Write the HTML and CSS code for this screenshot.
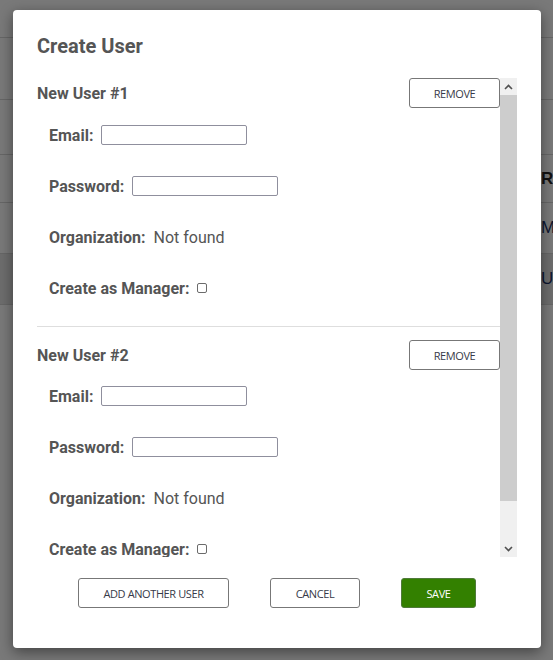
FILE: index.html
```html
<!DOCTYPE html>
<html>
<head>
<meta charset="utf-8">
<link rel="stylesheet" href="styles.css">
</head>
<body>
<div class="page">
  <div class="bg-row h37"></div>
  <div class="bg-row h63"></div>
  <div class="bg-row h55"></div>
  <div class="bg-row h48"><span class="cell head">Ro</span></div>
  <div class="bg-row h51"><span class="cell">M</span></div>
  <div class="bg-row h51 dark"><span class="cell">U</span></div>
  <div class="bg-row rest"></div>
</div>

<div class="modal">
  <h2 class="title">Create User</h2>
  <div class="scroll-wrap">
    <div class="scroll-content">
      <section class="user">
        <div class="user-head">
          <h3 class="user-title">New User #1</h3>
          <button class="btn remove">REMOVE</button>
        </div>
        <div class="field first"><label class="lbl">Email:</label><input class="inp" type="text"></div>
        <div class="field"><label class="lbl">Password:</label><input class="inp" type="password"></div>
        <div class="field"><span class="lbl">Organization:</span><span class="val">Not found</span></div>
        <div class="field"><label class="lbl">Create as Manager:</label><span class="chk"></span></div>
      </section>
      <div class="divider"></div>
      <section class="user second">
        <div class="user-head">
          <h3 class="user-title">New User #2</h3>
          <button class="btn remove">REMOVE</button>
        </div>
        <div class="field first"><label class="lbl">Email:</label><input class="inp" type="text"></div>
        <div class="field"><label class="lbl">Password:</label><input class="inp" type="password"></div>
        <div class="field"><span class="lbl">Organization:</span><span class="val">Not found</span></div>
        <div class="field"><label class="lbl">Create as Manager:</label><span class="chk"></span></div>
      </section>
      <div class="tail"></div>
    </div>
    <div class="scrollbar">
      <div class="sb-btn">
        <svg width="9" height="6" viewBox="0 0 9 6"><path d="M1 5 L4.5 1.5 L8 5" fill="none" stroke="#505050" stroke-width="1.6"/></svg>
      </div>
      <div class="sb-thumb"></div>
      <div class="sb-track"></div>
      <div class="sb-btn">
        <svg width="9" height="6" viewBox="0 0 9 6"><path d="M1 1 L4.5 4.5 L8 1" fill="none" stroke="#505050" stroke-width="1.6"/></svg>
      </div>
    </div>
  </div>
  <div class="footer">
    <button class="btn add">ADD ANOTHER USER</button>
    <button class="btn cancel">CANCEL</button>
    <button class="btn save">SAVE</button>
  </div>
</div>
</body>
</html>
```

FILE: styles.css
```css
* { box-sizing: border-box; }
html, body { margin: 0; padding: 0; }
body {
  width: 553px;
  height: 660px;
  overflow: hidden;
  background: #797979;
  font-family: Roboto, "Liberation Sans", sans-serif;
  position: relative;
}
.page { display: flex; flex-direction: column; }
.bg-row {
  display: flex;
  align-items: center;
  border-bottom: 1px solid #666;
  background: #797979;
  overflow: hidden;
}
.bg-row.h37 { height: 38px; }
.bg-row.h63 { height: 62px; }
.bg-row.h55 { height: 55px; }
.bg-row.h48 { height: 48px; }
.bg-row.h51 { height: 51px; }
.bg-row.dark { background: #6d6d6d; }
.bg-row.rest { height: 360px; border-bottom: none; }
.cell {
  margin-left: 541px;
  font-family: "Liberation Sans", Arial, sans-serif;
  font-size: 17px;
  color: #0c1530;
  white-space: nowrap;
}
.cell.head { font-weight: bold; color: #111; }

.modal {
  position: absolute;
  left: 13px;
  top: 10px;
  width: 528px;
  height: 638px;
  background: #fff;
  border-radius: 4px;
  box-shadow: 0 4px 14px rgba(0,0,0,0.45);
  padding: 24px 24px 40px 24px;
  display: flex;
  flex-direction: column;
}
.title {
  margin: 0 0 20px 0;
  font-size: 20px;
  line-height: 24px;
  font-weight: bold;
  color: #555;
}
.scroll-wrap {
  height: 479px;
  display: flex;
}
.scroll-content {
  flex: 1;
  overflow: hidden;
}
.user-head {
  height: 30px;
  display: flex;
  align-items: center;
  justify-content: space-between;
}
.user-title {
  margin: 0;
  font-size: 16px;
  font-weight: bold;
  color: #555;
  line-height: 20px;
  padding-top: 2px;
}
.field {
  height: 20px;
  margin-top: 31px;
  padding-left: 12px;
  display: flex;
  align-items: center;
  gap: 8px;
}
.field.first { margin-top: 17px; }
.second .field.first { margin-top: 16px; }
.lbl {
  font-size: 16px;
  font-weight: bold;
  color: #555;
}
.val {
  font-size: 16px;
  color: #555;
}
.inp {
  width: 146px;
  height: 20px;
  margin: 0;
  border: 1px solid #8f8f9d;
  border-radius: 2px;
  background: #fff;
  padding: 0 4px;
}
.chk {
  width: 10px;
  height: 10px;
  border: 1px solid #6b6b6b;
  border-radius: 2px;
  background: #fff;
}
.divider {
  height: 1px;
  background: #dedede;
  margin: 28px 0 13px 0;
}
.tail { height: 40px; }

.scrollbar {
  width: 17px;
  display: flex;
  flex-direction: column;
  background: #f0f0f0;
}
.sb-btn {
  height: 17px;
  display: flex;
  align-items: center;
  justify-content: center;
}
.sb-thumb {
  height: 406px;
  background: #cdcdcd;
}
.sb-track { flex: 1; }

.btn {
  height: 30px;
  border: 1px solid #777;
  border-radius: 3px;
  background: #fff;
  font-family: "Open Sans", "Liberation Sans", sans-serif;
  font-size: 11px;
  letter-spacing: -0.4px;
  color: #373a48;
  padding: 0;
  cursor: pointer;
}
.remove { width: 91px; }
.footer {
  margin-top: 21px;
  display: flex;
  justify-content: center;
  gap: 41px;
}
.add { width: 151px; }
.cancel { width: 90px; }
.save {
  width: 75px;
  background: #338000;
  border-color: #4f7a3a;
  color: #fff;
}
```
